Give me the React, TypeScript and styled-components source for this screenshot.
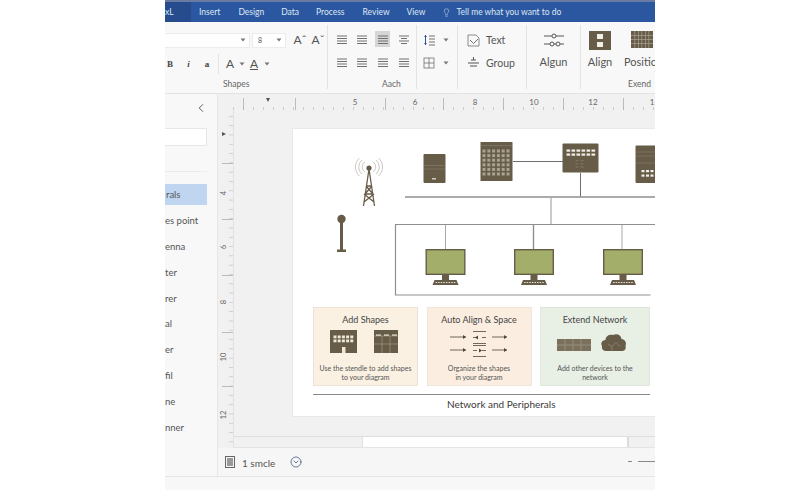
import React from "react";
import styled, { createGlobalStyle } from "styled-components";
import { ChevronLeft, CircleChevronDown, Lightbulb } from "lucide-react";

const Global = createGlobalStyle`
  html, body { margin: 0; padding: 0; background: #fff; overflow: hidden; }
  body { font-family: Lato, "Open Sans", "Liberation Sans", sans-serif; }
`;

const BROWN = "#675c47";
const ICON = "#707070";

const Frame = styled.div`
  margin-left: 165px; width: 490px; height: 490px; overflow: hidden;
  display: flex; flex-direction: column; background: #f7f7f7; color: #444;
`;
const TitleBar = styled.div`
  height: 22px; flex: none; box-sizing: border-box; display: flex; align-items: center;
  background: #2a579f; border-top: 2px solid #6a7ba3; color: #dfe7f5; font-size: 8.5px;
`;
const ActiveTab = styled.div`
  width: 26px; height: 100%; background: #264c8d; line-height: 20px; white-space: nowrap;
`;
const Tab = styled.div<{ $gap: number }>`
  margin-left: ${p => p.$gap}px; white-space: nowrap;
`;
const TellMe = styled.div`
  margin-left: 17px; display: flex; align-items: center; gap: 5px; white-space: nowrap;
`;

const Ribbon = styled.div`
  height: 72px; flex: none; box-sizing: border-box; display: flex; padding: 3px 0 4px;
  background: #f8f8f8; border-bottom: 1px solid #e4e4e4; overflow: hidden;
`;
const Group = styled.div<{ $w: number; $last?: boolean }>`
  width: ${p => p.$w}px; flex: none; box-sizing: border-box; position: relative;
  display: flex; flex-direction: column; border-right: ${p => (p.$last ? "none" : "1px solid #e3e3e3")};
`;
const GroupBody = styled.div`
  flex: 1; min-height: 0;
`;
const GroupLabel = styled.div<{ $pad: number }>`
  font-size: 8.5px; line-height: 10px; color: #666; padding-left: ${p => p.$pad}px; white-space: nowrap; height: 10px;
`;
const Row = styled.div<{ $top?: number }>`
  display: flex; align-items: center; height: 16px; margin-top: ${p => p.$top ?? 0}px;
`;
const Combo = styled.div<{ $w: number }>`
  width: ${p => p.$w}px; height: 15px; box-sizing: border-box; background: #fff; border: 1px solid #ececec; border-left-width: ${p => (p.$w > 50 ? 0 : 1)}px;
  display: flex; align-items: center; justify-content: space-between; padding: 0 3px 0 5px; font-size: 7px; color: #555; margin-right: 2px;
`;
const Fmt = styled.span<{ $w: number; $italic?: boolean; $left?: number }>`
  width: ${p => p.$w}px; font-family: "Liberation Serif", serif; font-weight: 700; font-size: 9px; color: #444;
  font-style: ${p => (p.$italic ? "italic" : "normal")}; text-align: center; flex: none; margin-left: ${p => p.$left ?? 0}px;
`;
const BigA = styled.span<{ $w: number; $under?: boolean; $left?: number }>`
  width: ${p => p.$w}px; flex: none; font-size: 12px; color: #555; line-height: 14px; text-align: center; margin-left: ${p => p.$left ?? 0}px;
  ${p => (p.$under ? "text-decoration: underline; text-underline-offset: 1px;" : "")}
`;
const VRule = styled.div`
  width: 1px; height: 20px; background: #e4e4e4; margin: 0 5px 0 6px; flex: none;
`;
const CaretSlot = styled.span<{ $left: number }>`
  margin-left: ${p => p.$left}px; display: flex;
`;
const Caret = () => (
  <svg width="6" height="4" viewBox="0 0 6 4" style={{ flex: "none" }}>
    <path d="M0.5 0.5h5L3 3.5z" fill="#777" />
  </svg>
);

const AlignGrid = styled.div`
  display: grid; grid-template-columns: repeat(4, 20.7px); grid-auto-rows: 16px; row-gap: 7px; padding: 6px 0 0 6px;
`;
const AlignCell = styled.div<{ $on?: boolean }>`
  display: flex; align-items: center; justify-content: center; width: 15px; height: 16px;
  background: ${p => (p.$on ? "#d6d6d6" : "transparent")};
`;
const Lines = ({ kind = 0 }: { kind?: number }) => (
  <svg width="10" height="9" viewBox="0 0 10 9">
    {[0.5, 3, 5.5, 8].map((y, i) => {
      const w = kind === 1 && i % 2 ? 6 : 10;
      return <rect key={y} x={(10 - w) / 2} y={y} width={w} height="1" fill={ICON} />;
    })}
  </svg>
);

const IconRow = styled.div<{ $top?: number }>`
  display: flex; align-items: center; height: 16px; margin-top: ${p => p.$top ?? 0}px; padding-left: 6px; gap: 8px;
`;
const TextAction = styled.div<{ $top?: number }>`
  display: flex; align-items: center; height: 16px; margin-top: ${p => p.$top ?? 0}px; padding-left: 9px; gap: 6px;
  font-size: 10.5px; color: #555; white-space: nowrap;
`;
const Stack = styled.div<{ $pad?: number }>`
  display: flex; flex-direction: column; align-items: center; width: 100%; padding-top: ${p => p.$pad ?? 0}px; box-sizing: border-box;
`;
const BigLabel = styled.div<{ $left?: number }>`
  font-size: 11px; color: #555; white-space: nowrap; line-height: 14px; margin-left: ${p => p.$left ?? 0}px;
`;
const IconBox = styled.div`
  height: 20px; display: flex; align-items: center; justify-content: center; margin-bottom: 5px;
`;
const AlignCols = styled.div`
  display: flex; padding-top: 6px;
`;
const AlignCol = styled.div<{ $w: number }>`
  width: ${p => p.$w}px; flex: none; display: flex; flex-direction: column; align-items: center;
`;
const BlockIcon = styled.svg<{ $bottom: number; $left?: number }>`
  display: block; margin-bottom: ${p => p.$bottom}px; margin-left: ${p => p.$left ?? 0}px;
`;
const ExendLabel = styled(GroupLabel)`
  position: absolute; bottom: 0; left: 0;
`;

const Body = styled.div`
  flex: 1; display: flex; min-height: 0;
`;
const Sidebar = styled.aside`
  width: 53px; flex: none; box-sizing: border-box; background: #f8f8f8; border-right: 1px solid #e6e6e6; display: flex; flex-direction: column;
`;
const Collapse = styled.div`
  height: 28px; display: flex; align-items: center; justify-content: flex-end; padding-right: 9px; color: #555;
`;
const Search = styled.div`
  width: 42px; height: 18px; box-sizing: border-box; margin-top: 6px; background: #fff; border: 1px solid #e6e6e6; border-left: none;
`;
const Divider = styled.div`
  width: 42px; height: 1px; background: #ececec; margin: 25px 0 12px;
`;
const ShapeRow = styled.div<{ $active?: boolean; $indent: number }>`
  width: 42px; height: 21px; margin-bottom: 4.9px; box-sizing: border-box; padding-left: ${p => p.$indent}px;
  background: ${p => (p.$active ? "#c0d6f0" : "transparent")}; font-size: 9.5px; line-height: 21px; color: #555; white-space: nowrap; overflow: hidden;
`;
const Main = styled.div`
  flex: 1; min-width: 0; display: flex; flex-direction: column;
`;
const RulerH = styled.svg`
  display: block; flex: none; width: 437px; height: 16px; background: #f1f1f1;
`;
const Center = styled.div`
  height: 338px; flex: none; display: flex;
`;
const RulerV = styled.svg`
  display: block; flex: none; width: 15px; height: 338px; background: #f1f1f1;
`;
const Work = styled.div`
  flex: 1; min-width: 0; display: flex; flex-direction: column;
`;
const Canvas = styled.div`
  height: 327px; flex: none; box-sizing: border-box; background: #f1f1f1; padding: 18px 0 0 58px;
  border-left: 1px solid #e2e2e2; border-bottom: 1px solid #dedede; overflow: hidden;
`;
const Sheet = styled.div`
  width: 363px; height: 289px; box-sizing: border-box; background: #fff; display: flex; flex-direction: column;
  border: 1px solid #e9e9e9; border-right: none;
`;
const Network = styled.svg`
  display: block; flex: none; width: 362px; height: 178px;
`;
const Cards = styled.div`
  display: flex; gap: 8.5px; padding-left: 20px;
`;
const Card = styled.div<{ $w: number; $bg: string; $bd: string }>`
  width: ${p => p.$w}px; height: 79px; box-sizing: border-box; flex: none; background: ${p => p.$bg}; border: 1px solid ${p => p.$bd};
  display: flex; flex-direction: column; align-items: center; padding-top: 6px; color: #444;
`;
const CardTitle = styled.div`
  font-size: 9px; line-height: 12px; white-space: nowrap;
`;
const CardArt = styled.svg`
  display: block; flex: none; margin-top: 4px; width: 100px; height: 28px;
`;
const CardText = styled.div`
  font-size: 7px; line-height: 9px; margin-top: 6px; text-align: center; white-space: nowrap; color: #555;
`;
const Rule = styled.div`
  width: 337px; height: 1px; margin: 8px 0 0 20px; background: #8a8a8a; flex: none;
`;
const Caption = styled.div`
  padding-left: 154px; font-size: 10px; line-height: 18px; color: #3a3a3a; white-space: nowrap;
`;
const TabStrip = styled.div`
  height: 11px; flex: none; background: #f1f1f1; padding-left: 128px; box-sizing: border-box; border-bottom: 1px solid #e4e4e4;
  border-left: 1px solid #e2e2e2;
`;
const SheetTab = styled.div`
  width: 267px; height: 10px; box-sizing: border-box; background: #fff; border-right: 2px solid #dcdcdc; border-left: 1px solid #e0e0e0;
`;
const Status = styled.div`
  height: 28px; flex: none; box-sizing: border-box; display: flex; align-items: center; padding: 0 0 1px 7px; background: #f6f6f6; color: #555; font-size: 10px;
`;
const StatusText = styled.span`
  margin: 3px 0 0 7px; white-space: nowrap;
`;
const StatusBtn = styled.span`
  margin-left: 15px; display: flex; color: #2f4668;
`;
const Zoom = styled.div`
  margin-left: auto; display: flex; align-items: center; gap: 6px;
`;
const ZoomDash = styled.div<{ $w: number }>`
  width: ${p => p.$w}px; height: 1px; background: #888;
`;
const Footer = styled.div`
  height: 14px; flex: none; background: #f7f7f7; border-top: 1px solid #e6e6e6; box-sizing: border-box;
`;

const hLong = [243, 295, 385, 443, 503, 563, 623];
const hLabels: [number, string][] = [[355, "5"], [415, "6"], [475, "8"], [534, "10"], [593, "12"], [652, "1"]];
const vLong = [163, 219, 275, 332, 386];
const vLabels: [number, string][] = [[193, "4"], [247, "6"], [302, "8"], [357, "10"], [415, "12"]];

const HRuler = () => {
  const ticks = [];
  for (let x = 233; x < 655; x += 10) ticks.push(x);
  return (
    <RulerH viewBox="218 94 437 16">
      {ticks.map(x => <rect key={x} x={x} y={107} width="0.7" height="3" fill="#bcbcbc" />)}
      {hLong.map(x => <rect key={x} x={x} y={98} width="0.8" height="12" fill="#b0b0b0" />)}
      <path d="M266 98h4l-2 4z" fill="#555" />
      {hLabels.map(([x, t]) => (
        <text key={t} x={x} y={105} fontSize="8" textAnchor="middle" fill="#666" fontFamily="Lato">{t}</text>
      ))}
    </RulerH>
  );
};
const VRuler = () => {
  const ticks = [];
  for (let y = 116; y < 448; y += 9.3) ticks.push(y);
  return (
    <RulerV viewBox="218 110 15 338">
      {ticks.map(y => <rect key={y} x={229} y={y} width="4" height="0.7" fill="#c4c4c4" />)}
      {vLong.map(y => <rect key={y} x={222} y={y} width="11" height="0.8" fill="#b0b0b0" />)}
      <path d="M222 132v4l4-2z" fill="#555" />
      {vLabels.map(([y, t]) => (
        <text key={t} transform={`translate(226 ${y}) rotate(-90)`} fontSize="7.5" textAnchor="middle" fill="#666" fontFamily="Lato">{t}</text>
      ))}
    </RulerV>
  );
};

const cells = (x: number, y: number, cols: number, rows: number, w: number, h: number, dx: number, dy: number, fill: string) => {
  const out: React.ReactElement[] = [];
  for (let r = 0; r < rows; r++) for (let c = 0; c < cols; c++)
    out.push(<rect key={`${x}-${y}-${r}-${c}`} x={x + c * dx} y={y + r * dy} width={w} height={h} fill={fill} />);
  return out;
};

const Monitor = ({ x }: { x: number }) => (
  <g>
    <rect x={x + 0.7} y={249.7} width="38.6" height="24.6" fill="#a4ae6b" stroke={BROWN} strokeWidth="1.4" />
    <rect x={x + 16.5} y={275} width="7" height="5" fill={BROWN} />
    <path d={`M${x + 9} 280h22l2 5h-26z`} fill={BROWN} />
    {cells(x + 10, 282, 8, 1, 1.6, 1, 2.6, 0, "#ddd")}
  </g>
);

const NetworkArt = () => (
  <Network viewBox="293 129 362 178">
    <g fill="none" stroke="#a9a59a" strokeWidth="0.6">
      <path d="M365 162a6 6 0 0 0 0 10M373 162a6 6 0 0 1 0 10M362 160a9 9 0 0 0 0 14M376 160a9 9 0 0 1 0 14M359.5 158a12 12 0 0 0 0 18M378.5 158a12 12 0 0 1 0 18" />
    </g>
    <circle cx="369" cy="168" r="2.6" fill={BROWN} />
    <path d="M369 169l-5.5 37M369 169l5.5 37M366.5 186h5M365.500 194h7M364 202l10-8M374 202l-10-8M366 186l7 8M372 186l-7 8" stroke={BROWN} strokeWidth="1.3" fill="none" />
    <circle cx="341.5" cy="219" r="4.2" fill={BROWN} />
    <rect x="340" y="222" width="3" height="28" fill={BROWN} />
    <rect x="337" y="249.5" width="9" height="2.5" fill={BROWN} />
    <rect x="423.5" y="154" width="22" height="29" rx="1" fill={BROWN} />
    <path d="M424 165.5h21M424 169h21" stroke="#8f8776" strokeWidth="0.5" />
    <rect x="432" y="178" width="4" height="1.5" fill="#cfc9bb" />
    <rect x="480.5" y="142" width="32" height="39" rx="0.5" fill={BROWN} />
    <path d="M481 145.5h31" stroke="#8f8776" strokeWidth="0.5" />
    {cells(482.5, 149.5, 6, 6, 3, 3, 4.8, 4.6, "#a9a292")}
    <rect x="562.5" y="143.5" width="36" height="29" rx="1" fill={BROWN} />
    {cells(566.5, 149.5, 6, 2, 3.6, 2.2, 5, 4, "#f2efe8")}
    {cells(575.5, 160, 2, 3, 3, 1.2, 5, 3.2, "#7d7463")}
    <rect x="635.5" y="145.5" width="22" height="37.5" rx="1" fill={BROWN} />
    <path d="M636 152h20M636 156h20M636 163h20" stroke="#8f8776" strokeWidth="0.5" />
    {cells(641.5, 170, 4, 2, 3, 2.2, 4.5, 4.5, "#f2efe8")}
    <path d="M513 161.5h50M580.5 173v24" stroke="#6e6e6e" strokeWidth="1" fill="none" />
    <path d="M405 197h250" stroke="#8f8f8f" strokeWidth="1.5" fill="none" />
    <path d="M551 197v28" stroke="#a8a8a8" strokeWidth="1.2" fill="none" />
    <path d="M655 224.5H395.5V295H650.5" stroke="#8f8f8f" strokeWidth="1.2" fill="none" />
    <path d="M445.5 225v25M622 225v25" stroke="#a8a8a8" strokeWidth="1" fill="none" />
    <path d="M533.5 225v25" stroke="#8f8f8f" strokeWidth="1.4" fill="none" />
    <Monitor x={425.5} />
    <Monitor x={514} />
    <Monitor x={603} />
  </Network>
);

const Arrow = ({ x, y, w }: { x: number; y: number; w: number }) => (
  <g>
    <rect x={x} y={y - 0.4} width={w} height="0.8" fill="#4d463a" />
    <path d={`M${x + w - 3} ${y - 2}l3 2-3 2z`} fill="#4d463a" />
  </g>
);

const App = () => (
  <>
    <Global />
    <Frame>
      <TitleBar>
        <ActiveTab>xL</ActiveTab>
        <Tab $gap={8}>Insert</Tab>
        <Tab $gap={18}>Design</Tab>
        <Tab $gap={17}>Data</Tab>
        <Tab $gap={17}>Process</Tab>
        <Tab $gap={18}>Review</Tab>
        <Tab $gap={17}>View</Tab>
        <TellMe>
          <Lightbulb size={9} strokeWidth={1.4} />
          Tell me what you want to do
        </TellMe>
      </TitleBar>
      <Ribbon>
        <Group $w={163}>
          <GroupBody>
            <Row $top={7}>
              <Combo $w={85}><span /><Caret /></Combo>
              <Combo $w={34}><span>8</span><Caret /></Combo>
              <BigA $w={18} $left={3}>Aˆ</BigA>
              <BigA $w={18}>Aˇ</BigA>
            </Row>
            <Row $top={8}>
              <Fmt $w={10}>B</Fmt>
              <Fmt $w={9} $italic $left={9}>i</Fmt>
              <Fmt $w={10} $left={9}>a</Fmt>
              <VRule />
              <BigA $w={12}>A</BigA>
              <CaretSlot $left={3}><Caret /></CaretSlot>
              <BigA $w={12} $under $left={3}>A</BigA>
              <CaretSlot $left={4}><Caret /></CaretSlot>
            </Row>
          </GroupBody>
          <GroupLabel $pad={58}>Shapes</GroupLabel>
        </Group>
        <Group $w={89}>
          <GroupBody>
            <AlignGrid>
              <AlignCell><Lines /></AlignCell>
              <AlignCell><Lines /></AlignCell>
              <AlignCell $on><Lines /></AlignCell>
              <AlignCell><Lines kind={1} /></AlignCell>
              <AlignCell><Lines /></AlignCell>
              <AlignCell><Lines /></AlignCell>
              <AlignCell><Lines /></AlignCell>
              <AlignCell><Lines /></AlignCell>
            </AlignGrid>
          </GroupBody>
          <GroupLabel $pad={54}>Aach</GroupLabel>
        </Group>
        <Group $w={41}>
          <GroupBody>
            <IconRow $top={7}>
              <svg width="12" height="12" viewBox="0 0 12 12">
                <path d="M2.5 1v10" stroke="#2a579f" strokeWidth="1" />
                <path d="M1 3l1.5-2 1.5 2zM1 9l1.5 2 1.5-2z" fill="#2a579f" />
                <path d="M6 2h6M6 5h6M6 8h6M6 11h6" stroke={ICON} strokeWidth="1" />
              </svg>
              <Caret />
            </IconRow>
            <IconRow $top={7}>
              <svg width="12" height="12" viewBox="0 0 12 12" fill="none" stroke={ICON} strokeWidth="0.8">
                <rect x="1" y="1" width="10" height="10" />
                <path d="M6 1v10M1 6h10" />
              </svg>
              <Caret />
            </IconRow>
          </GroupBody>
        </Group>
        <Group $w={69}>
          <GroupBody>
            <TextAction $top={7}>
              <svg width="13" height="13" viewBox="0 0 13 13" fill="none" stroke={ICON} strokeWidth="0.8">
                <path d="M1 1h8l3 3v8H1z" />
                <path d="M3 6l3.5 3.5L11 5" strokeWidth="1" />
              </svg>
              Text
            </TextAction>
            <TextAction $top={7}>
              <svg width="13" height="12" viewBox="0 0 13 12" fill="none" stroke="#555" strokeWidth="1">
                <path d="M1 6h11M3 9h7M4 3h5M6.5 0v3" />
              </svg>
              Group
            </TextAction>
          </GroupBody>
        </Group>
        <Group $w={54}>
          <Stack $pad={5}>
            <IconBox>
              <svg width="22" height="16" viewBox="0 0 22 16" fill="none" stroke="#555" strokeWidth="1">
                <path d="M1 4h8M13 4h8M1 12h6M11 12h2M17 12h4" />
                <circle cx="11" cy="4" r="2" /><circle cx="9" cy="12" r="2" /><circle cx="15" cy="12" r="2" />
              </svg>
            </IconBox>
            <BigLabel>Algun</BigLabel>
          </Stack>
        </Group>
        <Group $w={74} $last>
          <AlignCols>
            <AlignCol $w={38}>
              <BlockIcon width="22" height="19" viewBox="0 0 22 19" $bottom={5}>
                <rect width="22" height="19" fill={BROWN} />
                <rect x="8" y="3" width="6" height="5" fill="#f2efe8" />
                <rect x="8" y="11" width="6" height="5" fill="#f2efe8" />
              </BlockIcon>
              <BigLabel>Align</BigLabel>
            </AlignCol>
            <AlignCol $w={36}>
              <BlockIcon width="22" height="17" viewBox="0 0 22 17" $bottom={7} $left={9}>
                <rect width="22" height="17" fill={BROWN} />
                {[4, 8, 12].map(y => <rect key={y} x="0" y={y} width="22" height="0.7" fill="#a9a292" />)}
                {[3.5, 7, 10.5, 14, 17.5].map(x => <rect key={x} x={x} y="0" width="0.7" height="17" fill="#a9a292" />)}
              </BlockIcon>
              <BigLabel $left={13}>Position</BigLabel>
            </AlignCol>
          </AlignCols>
          <ExendLabel $pad={47}>Exend</ExendLabel>
        </Group>
      </Ribbon>
      <Body>
        <Sidebar>
          <Collapse><ChevronLeft size={14} strokeWidth={1.6} /></Collapse>
          <Search />
          <Divider />
          <ShapeRow $active $indent={1}>rals</ShapeRow>
          <ShapeRow $indent={0}>es point</ShapeRow>
          <ShapeRow $indent={0}>enna</ShapeRow>
          <ShapeRow $indent={0}>ter</ShapeRow>
          <ShapeRow $indent={0}>rer</ShapeRow>
          <ShapeRow $indent={0}>al</ShapeRow>
          <ShapeRow $indent={0}>er</ShapeRow>
          <ShapeRow $indent={0}>fil</ShapeRow>
          <ShapeRow $indent={0}>ne</ShapeRow>
          <ShapeRow $indent={0}>nner</ShapeRow>
        </Sidebar>
        <Main>
          <HRuler />
          <Center>
            <VRuler />
            <Work>
              <Canvas>
                <Sheet>
                  <NetworkArt />
                  <Cards>
                    <Card $w={105} $bg="#faf1e3" $bd="#ebe4d6">
                      <CardTitle>Add Shapes</CardTitle>
                      <CardArt viewBox="0 0 100 28">
                        <rect x="14" y="0" width="27" height="23" fill={BROWN} />
                        {cells(17.5, 5.5, 5, 2, 3, 2.8, 4.2, 4, "#efe8d8")}
                        <rect x="26" y="17" width="3.5" height="6" fill="#efe8d8" />
                        <rect x="58" y="0" width="24" height="23" fill={BROWN} />
                        <path d="M58 6h24M58 14h24M66 6v17M74 6v17" stroke="#a9a292" strokeWidth="0.6" />
                        {cells(60, 4.5, 3, 1, 5, 1.2, 8, 0, "#efe8d8")}
                      </CardArt>
                      <CardText>Use the stendle to add shapes<br />to your diagram</CardText>
                    </Card>
                    <Card $w={105} $bg="#fbeee0" $bd="#efe6da">
                      <CardTitle>Auto Align &amp; Space</CardTitle>
                      <CardArt viewBox="0 0 100 28">
                        <Arrow x={21} y={7} w={16} />
                        <Arrow x={21} y={20} w={16} />
                        <Arrow x={63} y={7} w={15} />
                        <Arrow x={63} y={20} w={15} />
                        <g fill="#4d463a">
                          <rect x="44" y="1" width="13" height="0.8" />
                          <rect x="44" y="13" width="13" height="0.8" />
                          <rect x="44" y="15" width="13" height="0.8" />
                          <rect x="44" y="26" width="13" height="0.8" />
                          <rect x="44" y="7" width="5" height="0.8" />
                          <rect x="53" y="7" width="4" height="0.8" />
                          <rect x="44" y="20" width="4" height="0.8" />
                          <rect x="53" y="20" width="4" height="0.8" />
                          <path d="M46 7.4l3-2v4zM53 20.4l-3-2v4z" />
                        </g>
                      </CardArt>
                      <CardText>Organize the shapes<br />in your diagram</CardText>
                    </Card>
                    <Card $w={110} $bg="#e8efe5" $bd="#dfe6dc">
                      <CardTitle>Extend Network</CardTitle>
                      <CardArt viewBox="0 0 100 28">
                        <rect x="12" y="9" width="34" height="12" fill="#7a705c" />
                        <path d="M12 15h34M20 9v12M28 9v12M36 9v12" stroke="#a9a292" strokeWidth="0.6" />
                        <path d="M62 21c-4 0-5.5-2-5-5-2-3 .5-6 3.5-6 0-4 4-6 7.5-5 4-2 8 0 8.5 4 3.5 0 5.5 4 4 7 1 3-1 5-4 5z" fill={BROWN} />
                        <path d="M63 14l4 2.5 4-4M71 12.5l4 4M67 16.5v4" stroke="#a9a292" strokeWidth="0.5" fill="none" />
                      </CardArt>
                      <CardText>Add other devices to the<br />network</CardText>
                    </Card>
                  </Cards>
                  <Rule />
                  <Caption>Network and Peripherals</Caption>
                </Sheet>
              </Canvas>
              <TabStrip><SheetTab /></TabStrip>
            </Work>
          </Center>
          <Status>
            <svg width="10" height="12" viewBox="0 0 10 12" fill="none">
              <rect x="0.5" y="0.5" width="9" height="11" stroke="#666" />
              <rect x="2" y="2" width="6" height="8" fill="#999" />
            </svg>
            <StatusText>1 smcle</StatusText>
            <StatusBtn><CircleChevronDown size={12} strokeWidth={1.4} /></StatusBtn>
            <Zoom>
              <ZoomDash $w={4} />
              <ZoomDash $w={17} />
            </Zoom>
          </Status>
        </Main>
      </Body>
      <Footer />
    </Frame>
  </>
);

export default App;
